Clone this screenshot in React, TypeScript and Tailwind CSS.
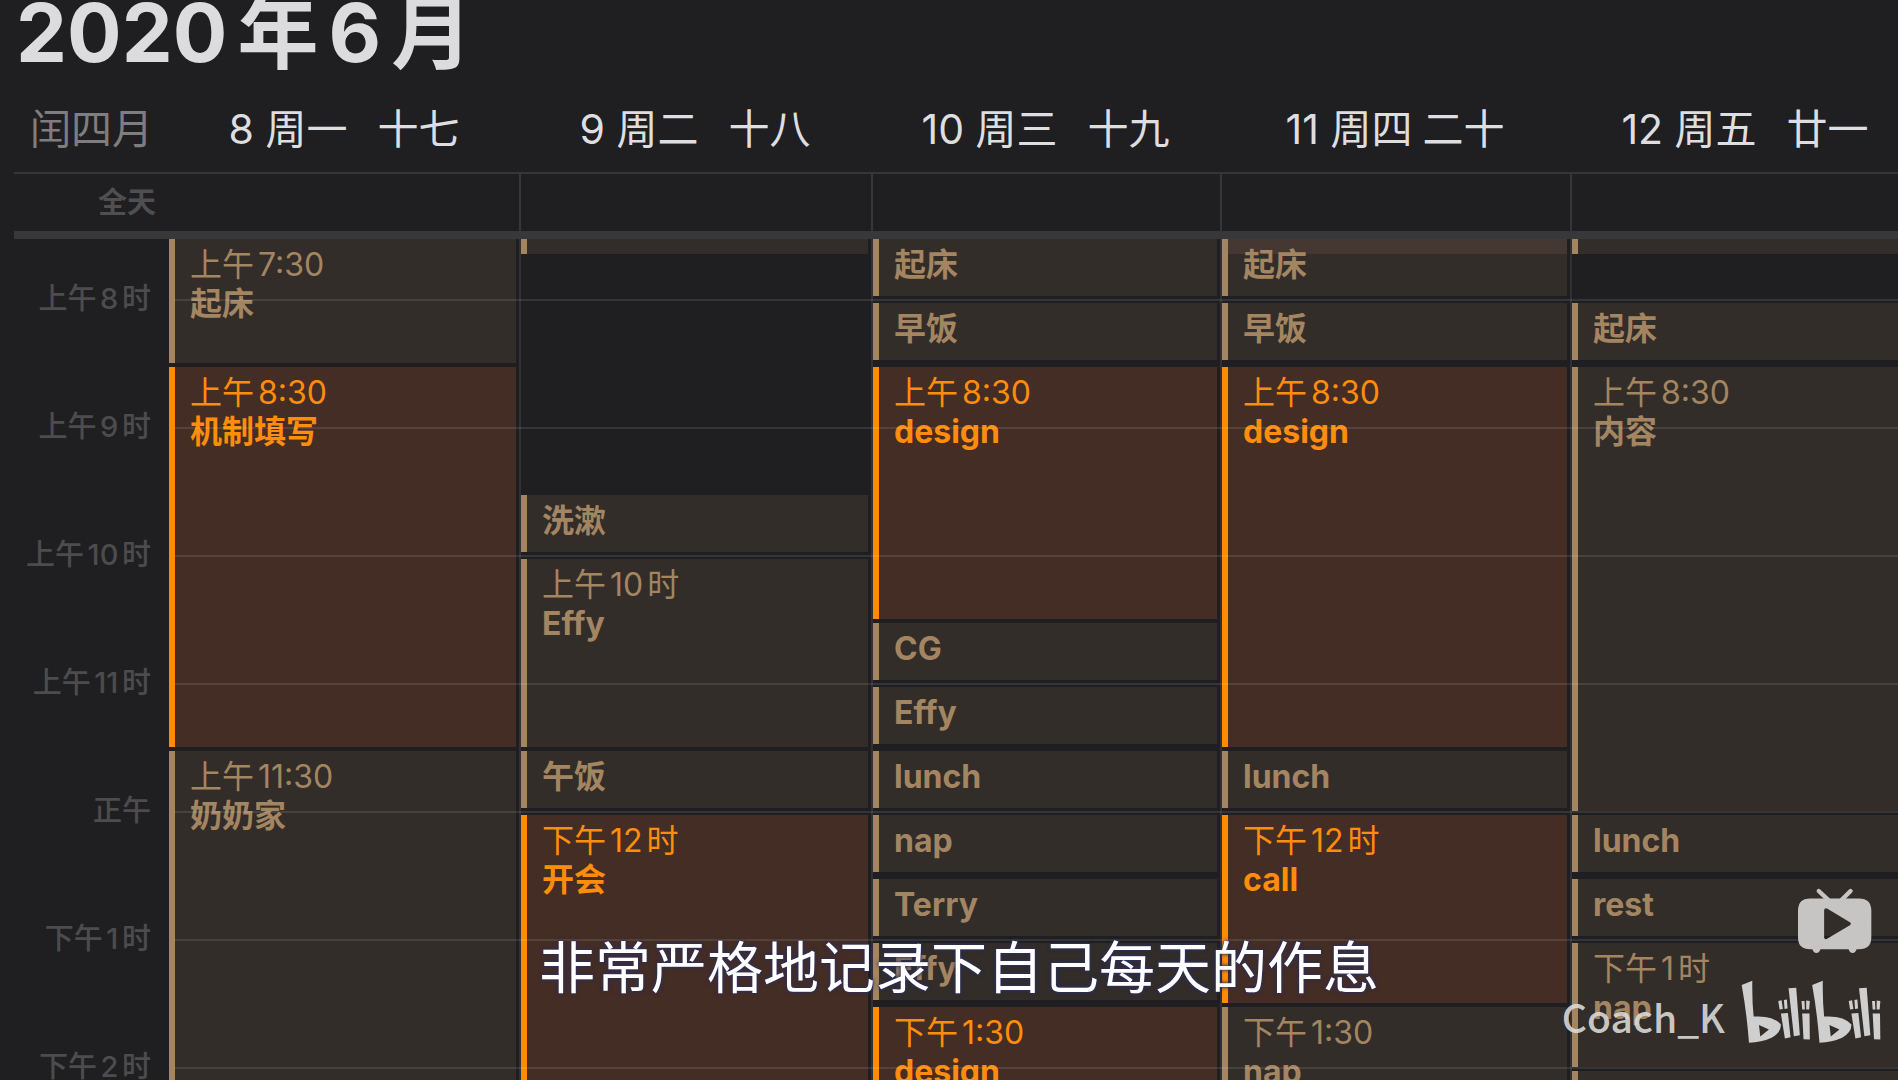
type Kind = 'dim' | 'hot';

interface Entry {
  title?: string;
  time?: string;
  kind?: Kind;
  /** Tailwind height of the block */
  size: string;
  /** empty stretch of the column */
  blank?: boolean;
  /** a neighbouring entry overlaps the top edge */
  overlap?: boolean;
}

const hours = ['上午8时', '上午9时', '上午10时', '上午11时', '正午', '下午1时', '下午2时'];

const dayColumns = 'grid grid-cols-[350fr_352fr_349fr_350fr_350fr]';

const H = {
  half: 'h-[57px] mb-[7px]',
  one: 'h-[124px] mb-[4px]',
  oneHalf: 'h-[188px] mb-[4px]',
  two: 'h-[252px] mb-[4px]',
  three: 'h-[380px] mb-[4px]',
  threeHalf: 'h-[444px] mb-[4px]',
  tail: 'h-[15px]',
};

const days: { date: string; lunar: string; tight?: boolean; entries: Entry[] }[] = [
  {
    date: '8 周一',
    lunar: '十七',
    entries: [
      { time: '上午7:30', title: '起床', size: H.one },
      { time: '上午8:30', title: '机制填写', kind: 'hot', size: H.three },
      { time: '上午11:30', title: '奶奶家', size: H.threeHalf },
    ],
  },
  {
    date: '9 周二',
    lunar: '十八',
    entries: [
      { size: H.tail },
      { size: 'h-[241px]', blank: true },
      { title: '洗漱', size: H.half },
      { time: '上午10时', title: 'Effy', size: H.oneHalf },
      { title: '午饭', size: H.half },
      { time: '下午12时', title: '开会', kind: 'hot', size: H.three },
    ],
  },
  {
    date: '10 周三',
    lunar: '十九',
    entries: [
      { title: '起床', size: H.half },
      { title: '早饭', size: H.half },
      { time: '上午8:30', title: 'design', kind: 'hot', size: H.two },
      { title: 'CG', size: H.half },
      { title: 'Effy', size: H.half },
      { title: 'lunch', size: H.half },
      { title: 'nap', size: H.half },
      { title: 'Terry', size: H.half },
      { title: 'Effy', size: H.half },
      { time: '下午1:30', title: 'design', kind: 'hot', size: H.two },
    ],
  },
  {
    date: '11 周四',
    lunar: '二十',
    tight: true,
    entries: [
      { title: '起床', size: H.half, overlap: true },
      { title: '早饭', size: H.half },
      { time: '上午8:30', title: 'design', kind: 'hot', size: H.three },
      { title: 'lunch', size: H.half },
      { time: '下午12时', title: 'call', kind: 'hot', size: H.oneHalf },
      { time: '下午1:30', title: 'nap', size: H.two },
    ],
  },
  {
    date: '12 周五',
    lunar: '廿一',
    entries: [
      { size: H.tail },
      { size: 'h-[49px]', blank: true },
      { title: '起床', size: H.half },
      { time: '上午8:30', title: '内容', size: H.threeHalf },
      { title: 'lunch', size: H.half },
      { title: 'rest', size: H.half },
      { time: '下午1时', title: 'nap', size: H.one },
      { size: H.two },
    ],
  },
];

function Block({ entry }: { entry: Entry }) {
  if (entry.blank) return <div className={`${entry.size} shrink-0`} />;
  const tone =
    entry.kind === 'hot'
      ? 'border-[#ff8c00] bg-[#442d24] text-[#ff8c0a]'
      : 'border-[#a38562] bg-[#322d29] text-[#a38562]';
  return (
    <article
      className={`${entry.size} ${tone} relative mr-[3px] shrink-0 overflow-hidden border-l-6 pl-[15px] text-[32px] leading-[39px]`}
    >
      {entry.overlap && <div className="absolute inset-x-0 top-0 h-[15px] bg-[#453832]" />}
      {(entry.time || entry.title) && (
        <div className="relative pt-[6px]">
          {entry.time && <p>{entry.time}</p>}
          <h3 className="font-bold">{entry.title}</h3>
        </div>
      )}
    </article>
  );
}

function TvIcon() {
  return (
    <svg viewBox="770 50 230 200" className="w-[77px] fill-[#c6c5c4]" aria-hidden="true">
      <path d="M838 62 L870 92 M933 62 L903 92" stroke="#c6c5c4" strokeWidth="13" strokeLinecap="round" />
      <path
        fillRule="evenodd"
        d="M812 84 H958 Q995 84 995 121 V200 Q995 236 958 236 H951 Q948 247 939 247 Q930 247 927 236 H843 Q840 247 831 247 Q822 247 819 236 H812 Q776 236 776 200 V121 Q776 84 812 84 Z M854 119 V201 Q856 209 864 204 L931 164 Q937 160 931 155 L864 115 Q856 111 854 119 Z"
      />
    </svg>
  );
}

function BiliLogo() {
  return (
    <svg viewBox="600 325 430 195" className="w-[143px] fill-[#cfcfd0]" aria-hidden="true">
      <g id="half">
        <path
          fillRule="evenodd"
          d="M605 343 L637 330 Q636 390 641 438 Q700 434 723 462 Q724 485 695 502 Q665 516 627 517 Q620 425 605 343 Z M657 463 L661 498 L687 477 Z"
        />
        <path d="M715 391 L725 389 L729 415 L719 417 Z M732 388 L741 387 L743 414 L734 415 Z" />
        <path d="M723 429 L744 427 L752 500 L735 504 Z" />
        <path d="M746 353 L769 351 L780 494 L762 497 Z" />
        <path d="M785 391 L794 391 L795 417 L787 417 Z M799 390 L810 391 L808 417 L799 417 Z" />
        <path d="M787 429 L809 429 L810 507 L791 506 Z" />
      </g>
      <use href="#half" x="212" />
    </svg>
  );
}

export default function App() {
  return (
    <main
      lang="zh-CN"
      className="relative h-screen overflow-hidden bg-[#1f1f21] font-[Inter,'Noto_Sans_CJK_SC',sans-serif] [text-autospace:normal]"
    >
      <div className="-mr-[22px]">
        <h1 className="h-[88px] pl-4 text-[81px] leading-[66px] font-bold text-[#dcdcde]">2020年6月</h1>

        <header className="ml-[14px] flex h-[86px] items-center border-b-2 border-[#363638] text-[41px] text-[#dedee0]">
          <div className="w-[155px] shrink-0 pl-4 text-[#7e7e80]">闰四月</div>
          <div className={`${dayColumns} flex-1`}>
            {days.map((d) => (
              <div
                key={d.date}
                className={`flex justify-center whitespace-nowrap ${d.tight ? 'gap-[10px]' : 'gap-[30px]'}`}
              >
                <span>{d.date}</span>
                <span>{d.lunar}</span>
              </div>
            ))}
          </div>
        </header>

        <div className="ml-[14px] flex h-[65px] border-b-8 border-[#38383a]">
          <div className="flex w-[155px] shrink-0 items-center justify-end pr-[13px] text-[29px] font-bold text-[#4f4f51]">
            全天
          </div>
          <div className={`${dayColumns} flex-1`}>
            {days.map((d) => (
              <div key={d.date} className="border-l-2 border-[#363638] first:border-l-0" />
            ))}
          </div>
        </div>

        <section className="flex h-[841px] overflow-hidden">
          <div className="w-[169px] shrink-0 pt-[28px] pr-[18px] text-right text-[29px] font-medium text-[#4c4c4e]">
            {hours.map((h) => (
              <div key={h} className="h-32 leading-[64px]">
                {h}
              </div>
            ))}
          </div>
          <div className="relative flex-1">
            <div className={`${dayColumns} h-full`}>
              {days.map((d) => (
                <div
                  key={d.date}
                  className="flex h-[841px] flex-col overflow-hidden border-l-2 border-[#313135] first:border-l-0"
                >
                  {d.entries.map((e, i) => (
                    <Block key={i} entry={e} />
                  ))}
                </div>
              ))}
            </div>
            <div className="pointer-events-none absolute inset-x-0 top-0 pt-[60px]">
              {hours.map((h) => (
                <div key={h} className="ml-[6px] h-32 border-t-2 border-white/10" />
              ))}
            </div>
          </div>
        </section>
      </div>

      <p className="absolute inset-x-0 bottom-[76px] pl-5 text-center text-[56px] leading-[72px] text-white [text-shadow:0_0_4px_#2b2f66,0_0_3px_#2b2f66]">
        非常严格地记录下自己每天的作息
      </p>

      <div className="absolute right-[15px] bottom-[36px] flex flex-col items-end">
        <div className="mr-[10px] mb-[25px]">
          <TvIcon />
        </div>
        <div className="flex items-end gap-[15px]">
          <span className="font-['Noto_Sans_CJK_SC',sans-serif] text-[39px] leading-[56px] font-medium text-[#dcdcdc]/90">
            Coach_K
          </span>
          <BiliLogo />
        </div>
      </div>
    </main>
  );
}
